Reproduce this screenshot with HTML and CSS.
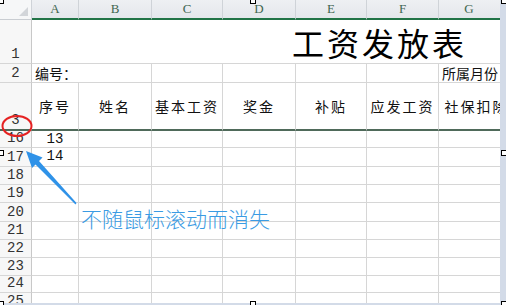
FILE: index.html
```html
<!DOCTYPE html>
<html lang="zh-CN">
<head>
    <meta charset="UTF-8">
    <title>工资发放表</title>
    <link rel="stylesheet" href="styles.css">
</head>
<body>
    <div class="screen">
        <div class="main">
            <div class="sheet">
                <div class="row hdr">
                    <div class="corner"><span class="tri"></span></div>
                    <div class="col">A</div><div class="col">B</div><div class="col">C</div><div class="col">D</div>
                    <div class="col">E</div><div class="col">F</div><div class="col g">G</div>
                </div>
                <div class="row r1">
                    <div class="num">1</div>
                    <div class="cell title">工资发放表</div>
                </div>
                <div class="row r2">
                    <div class="num">2</div>
                    <div class="cell span2 label">编号：</div>
                    <div class="cell"></div><div class="cell"></div><div class="cell"></div><div class="cell"></div>
                    <div class="cell label">所属月份</div>
                </div>
                <div class="row r3 frozen">
                    <div class="num">3</div>
                    <div class="cell head">序号</div><div class="cell head">姓名</div><div class="cell head">基本工资</div>
                    <div class="cell head">奖金</div><div class="cell head">补贴</div><div class="cell head">应发工资</div>
                    <div class="cell head">社保扣除</div>
                </div>
                <div class="row h17"><div class="num">16</div><div class="cell val">13</div><div class="cell"></div><div class="cell"></div><div class="cell"></div><div class="cell"></div><div class="cell"></div><div class="cell"></div></div>
                <div class="row h19"><div class="num">17</div><div class="cell val">14</div><div class="cell"></div><div class="cell"></div><div class="cell"></div><div class="cell"></div><div class="cell"></div><div class="cell"></div></div>
                <div class="row h18"><div class="num">18</div><div class="cell"></div><div class="cell"></div><div class="cell"></div><div class="cell"></div><div class="cell"></div><div class="cell"></div><div class="cell"></div></div>
                <div class="row h18"><div class="num">19</div><div class="cell"></div><div class="cell"></div><div class="cell"></div><div class="cell"></div><div class="cell"></div><div class="cell"></div><div class="cell"></div></div>
                <div class="row h19"><div class="num">20</div><div class="cell"></div><div class="cell"></div><div class="cell"></div><div class="cell"></div><div class="cell"></div><div class="cell"></div><div class="cell"></div></div>
                <div class="row h18"><div class="num">21</div><div class="cell"></div><div class="cell"></div><div class="cell"></div><div class="cell"></div><div class="cell"></div><div class="cell"></div><div class="cell"></div></div>
                <div class="row h18"><div class="num">22</div><div class="cell"></div><div class="cell"></div><div class="cell"></div><div class="cell"></div><div class="cell"></div><div class="cell"></div><div class="cell"></div></div>
                <div class="row h18"><div class="num">23</div><div class="cell"></div><div class="cell"></div><div class="cell"></div><div class="cell"></div><div class="cell"></div><div class="cell"></div><div class="cell"></div></div>
                <div class="row h17"><div class="num">24</div><div class="cell"></div><div class="cell"></div><div class="cell"></div><div class="cell"></div><div class="cell"></div><div class="cell"></div><div class="cell"></div></div>
                <div class="row h18"><div class="num">25</div><div class="cell"></div><div class="cell"></div><div class="cell"></div><div class="cell"></div><div class="cell"></div><div class="cell"></div><div class="cell"></div></div>
            </div>
            <div class="vbar"></div>
        </div>
        <div class="hbar"></div>

        <!-- annotation drawn over the sheet -->
        <svg class="marks" width="506" height="305" viewBox="0 0 506 305">
            <ellipse cx="17" cy="126" rx="14.5" ry="10" fill="none" stroke="#e52222" stroke-width="2"/>
            <polygon points="26,151 42.5,157.5 39,161 76.5,203 75.5,204.5 35.5,164.5 32,168" fill="#2f92e8"/>
        </svg>
        <div class="note">不随鼠标滚动而消失</div>

        <span class="handle h-tl"></span><span class="handle h-tm"></span><span class="handle h-tr"></span>
        <span class="handle h-ml"></span><span class="handle h-mr"></span>
        <span class="handle h-bl"></span><span class="handle h-bm"></span><span class="handle h-br"></span>
    </div>
</body>
</html>
```

FILE: styles.css
```css
body {
    margin: 0;
    background: #fff;
    font-family: "Noto Sans CJK SC", "Noto Sans", sans-serif;
    overflow: hidden;
}
.screen {
    position: relative;
    width: 506px;
    height: 305px;
    overflow: hidden;
    display: flex;
    flex-direction: column;
}
.main {
    display: flex;
    height: 303px;
}
.sheet {
    width: 500px;
    height: 303px;
    overflow: hidden;
    background: #fff;
}
.vbar {
    width: 6px;
    background: #d3dbe8;
}
.hbar {
    height: 2px;
    background: #d3dbe8;
}
.row {
    display: grid;
    grid-template-columns: 32px 47px 73px 71px 73px 71px 72px 76px;
    width: 515px;
}
.row > div {
    box-sizing: border-box;
    border-right: 1px solid #d6d6d6;
    border-bottom: 1px solid #d6d6d6;
    white-space: nowrap;
    overflow: hidden;
}

/* column header band */
.hdr { height: 20px; }
.hdr > div {
    background: linear-gradient(#eef0f3, #e4e7eb);
    border-right-color: #cfd3d8;
}
.corner {
    position: relative;
    background: #f6f7f8 !important;
    border-bottom: 1px solid #c9cdd2 !important;
}
.tri {
    position: absolute;
    right: 3px;
    bottom: 3px;
    width: 0;
    height: 0;
    border-left: 9px solid transparent;
    border-bottom: 9px solid #d2d5d9;
}
.col {
    border-bottom: 2px solid #217346 !important;
    text-align: center;
    font-family: "Liberation Serif", serif;
    font-size: 13px;
    line-height: 17px;
    color: #3f6650;
}
.col.g { padding-right: 15px; }

/* row numbers */
.num {
    background: #f7f7f7;
    border-right-color: #c8c8c8 !important;
    font-family: "Liberation Mono", monospace;
    font-size: 14px;
    color: #333;
    text-align: center;
    display: flex;
    align-items: flex-end;
    justify-content: center;
    line-height: 17px;
}

.cell {
    font-size: 14px;
    color: #111;
}
.r1 { height: 44px; }
.r2 { height: 19px; }
.r3 { height: 48px; }
.h17 { height: 17px; }
.h18 { height: 18px; }
.h19 { height: 19px; }

.title {
    grid-column: 2 / -1;
    padding-left: 260px;
    font-size: 32px;
    letter-spacing: 3px;
    line-height: 44px;
    color: #000;
}
.span2 { grid-column: span 2; }
.row > .label {
    line-height: 18px;
    padding-left: 3px;
    font-size: 14px;
    overflow: visible;
}

.frozen > div { border-bottom: 2px solid #4f6a5a !important; }
.head {
    text-align: center;
    line-height: 46px;
    letter-spacing: 2px;
}
.val {
    text-align: center;
    line-height: 17px;
    font-family: "Liberation Mono", monospace;
}

.marks {
    position: absolute;
    left: 0;
    top: 0;
    pointer-events: none;
}
.note {
    position: absolute;
    left: 81px;
    top: 203px;
    font-size: 21px;
    font-weight: 300;
    color: #3a9be3;
    white-space: nowrap;
}
.handle {
    position: absolute;
    width: 4px;
    height: 4px;
    background: #fff;
    border: 1px solid #000;
}
.h-tl { left: -2px; top: -2px; }
.h-tm { left: 250px; top: -2px; }
.h-tr { left: 501px; top: -2px; }
.h-ml { left: -2px; top: 150px; }
.h-mr { left: 501px; top: 150px; }
.h-bl { left: -2px; top: 301px; }
.h-bm { left: 250px; top: 301px; }
.h-br { left: 501px; top: 301px; }
```
